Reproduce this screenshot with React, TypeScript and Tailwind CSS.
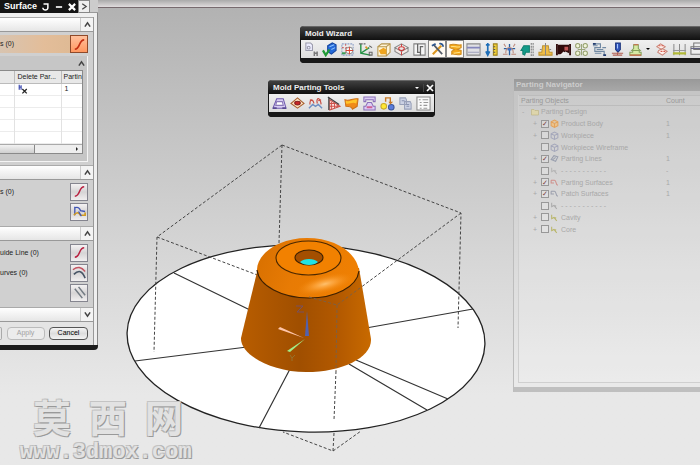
import type { ReactNode } from 'react'

type Tool = { name: string; art: ReactNode; active?: boolean }

function Glyph({ children, size = 'h-[15px] w-[15px]' }: { children: ReactNode; size?: string }) {
    return (
        <svg className={`${size} shrink-0`} viewBox="0 0 16 16" fill="none" strokeWidth={1.1} aria-hidden="true">
            {children}
        </svg>
    )
}

const wizardTools: Tool[] = [
    { name: 'Initialize Project', art: <><path d="M2 1h5l2 2v6H2z" fill="#eef" stroke="#99a" /><circle cx="5" cy="6" r="1.5" stroke="#99a" /><path d="M11 10v5M11 12h3M14 10v5" stroke="#777" strokeWidth="1.6" /></> },
    { name: 'Family Mold', art: <><path d="M6 4l5-3 4 2v6l-5 4-4-3z" fill="#2468d8" stroke="#1848a0" /><path d="M8 5l5-2M10 8l4-2" stroke="#8fc4ff" /><path d="M1 9l3 5 4-6" stroke="#219a35" strokeWidth="2.4" /></> },
    { name: 'Mold CSYS', art: <><path d="M2 2h12v12H2z" stroke="#8da0c8" strokeDasharray="2 1" /><path d="M2 6h12M6 2v12" stroke="#c66" strokeDasharray="2 2" /><circle cx="10" cy="9" r="3.5" fill="#fff" stroke="#999" /><path d="M10 5v8M6 9h8" stroke="#d43" /><path d="M2 12h4" stroke="#3a9e58" strokeWidth="2" /></> },
    { name: 'Shrinkage', art: <><path d="M3 2v10l10 2M3 12l9-6" stroke="#259245" strokeWidth="1.5" /><path d="M1 2h4M6 2h2M12 4l3 2M12 11h3v3h-3z" stroke="#666" /><path d="M8 5l2 2" stroke="#d93" strokeWidth="2" /></> },
    { name: 'Workpiece', art: <><path d="M2 5l4-3h9v9l-4 4H2z" fill="#fff5d8" stroke="#b3924a" /><path d="M2 5h9v10M11 5l4-3" stroke="#b3924a" /><path d="M3 9l5-3 3 2v5H5z" fill="#f0a51e" /></> },
    { name: 'Cavity Layout', art: <><path d="M8 2l7 4-7 4-7-4zM1 6v4l7 4 7-4V6" fill="#f5e9e5" stroke="#888" /><ellipse cx="8" cy="7" rx="3" ry="2" stroke="#c33" /><path d="M8 2v3M8 10v4" stroke="#c44" /></> },
    { name: 'Mold Tools Split', art: <><path d="M2 2h12v12H2z" fill="#f5f5f5" stroke="#808080" /><path d="M6 2v9h3V5h3M9 14v-3" stroke="#666" strokeWidth="1.4" /></> },
    { name: 'Mold Tools', active: true, art: <><path d="M3 13L12 4" stroke="#dc951c" strokeWidth="2.2" /><path d="M4 3l9 10" stroke="#565d68" strokeWidth="1.8" /><path d="M2 4l4-2M10 2c2-1 4 1 4 3" stroke="#31598f" strokeWidth="2" /></> },
    { name: 'Parting', active: true, art: <><path d="M2 3c5-2 7 1 12 0v3l-4 2 4 1v4c-5 2-8-1-10 0v-3l3-2-5-2z" fill="#f5a81a" stroke="#cf8d22" /><path d="M3 5c4-1 6 1 10 0M6 12c3-1 4 0 7-1" stroke="#ffe48a" /></> },
    { name: 'Mold Base', art: <><path d="M1 2h14v12H1z" fill="#e0e0e4" stroke="#888" /><path d="M1 5h14v2H1z" fill="#8486bb" /><path d="M2 11h12" stroke="#9ea0bb" /></> },
    { name: 'Standard Parts', art: <><path d="M4 1v13M2 10l2 4 2-4M2 3h4" stroke="#1f6fb8" strokeWidth="1.8" /><path d="M10 2h4v12h-4z" fill="#f3d138" stroke="#9b801a" /><path d="M10 5h2M10 8h2M10 11h2" stroke="#555" /></> },
    { name: 'Ejector Pin', art: <><path d="M2 7h12M8 2v12" stroke="#275e9f" strokeWidth="1.4" /><path d="M4 12c0-8 8-8 8 0M1 13h5M10 13h5M4 5L2 2M12 5l2-3" stroke="#bd8a7c" /><path d="M6 8h4" stroke="#3d70c9" strokeWidth="2" /></> },
    { name: 'Slide and Lifter', art: <><path d="M1 9l3-5h6v7H6l-1 3-2-1V9z" fill="#139b89" stroke="#138070" /><path d="M12 1v14M14 1v14" stroke="#777" strokeDasharray="2 1" /></> },
    { name: 'Sub-insert', art: <><path d="M5 4h6l1 7h3v3H1v-3h3z" fill="#f0bd45" stroke="#bd9435" /><path d="M8 1v13M2 8h2M12 8h2" stroke="#888" /></> },
    { name: 'Gate Library', art: <><path d="M1 2v12M15 2v12" stroke="#351010" strokeWidth="2" /><path d="M2 3h12v9l-4-2-4 3H2z" fill="#300c0c" /><path d="M9 5h4v4H9z" fill="#be5555" /><path d="M4 14l4-4 4 4z" fill="#eee" /></> },
    { name: 'Runner', art: <><path d="M8 2v12M4 8h8" stroke="#9aa67a" /><g fill="#f0f5d9" stroke="#96a070"><circle cx="4" cy="4" r="2.3" /><circle cx="12" cy="4" r="2.3" /><circle cx="4" cy="12" r="2.3" /><circle cx="12" cy="12" r="2.3" /></g></> },
    { name: 'Cooling Channel', art: <><path d="M1 2h8v4H3v4h10v4M1 4h5M11 6h4M5 8h7M3 12h7" stroke="#7189a3" strokeWidth="1.2" /><path d="M1 2h3M12 14h3" stroke="#233d70" strokeWidth="2" /></> },
    { name: 'Electrode', art: <><path d="M6 1h5v7l-2.5 3L6 8z" fill="#3458bd" stroke="#1b347b" /><path d="M8 11v3M2 12h12M3 14h10" stroke="#b36052" /><path d="M8 2v5" stroke="#a7c8ff" /></> },
    { name: 'Pocket', art: <><path d="M6 7V3h5v4l2 2H4zM5 9h7v2h2v3H2v-3h3z" fill="#d5e9a3" stroke="#84a05a" /><path d="M6 3h5M2 14h12" stroke="#cb6649" /></> },
]

const trailingTools: Tool[] = [
    { name: 'Trim Mold Components', art: <><path d="M3 5l4-3 5 3-4 3zM5 9l4-2 5 3-5 4-5-3z" fill="#fff1ed" stroke="#cb8679" /><path d="M5 4h6M7 10h5" stroke="#d95b4a" strokeDasharray="2 1" /></> },
    { name: 'View Manager', art: <><path d="M2 2v12M8 2v12M14 2v12" stroke="#8b8b8b" /><path d="M1 12h14" stroke="#b2ba37" strokeWidth="2.4" /><path d="M1 9h14" stroke="#999" /></> },
    { name: 'Drawing', art: <><path d="M4 1h11v7H4zM1 5h11v8H1z" fill="#eee" stroke="#777" /><path d="M1 7h11" stroke="#668" /></> },
]

const partingTools: Tool[] = [
    { name: 'Design Regions', art: <><path d="M5 3h7l3 10H1z" fill="#d8cef3" stroke="#6f5bae" /><path d="M5 6h6l1 4H4z" fill="#fff" stroke="#8a79b8" /><path d="M1 13h4M11 13h4" stroke="#5a4b92" strokeWidth="1.8" /></> },
    { name: 'Extract Regions', art: <><path d="M8 2l7 6-7 5-7-5z" fill="#ffe7c4" stroke="#a96333" /><ellipse cx="8" cy="7.500" rx="3" ry="2" fill="#c82626" stroke="#842020" /></> },
    { name: 'Create Patch', art: <><path d="M2 9c0-9 5-3 4-1M10 8C8 2 13 0 14 9M2 4l3 1M14 4l-3 1" stroke="#c95046" strokeWidth="1.3" /><path d="M1 13l4-4 3 2 3-2 4 4" stroke="#708fc2" strokeWidth="1.5" /></> },
    { name: 'Edit Parting Lines', art: <><path d="M4 4l11 7-11 4z" fill="#fff0ee" stroke="#c9524b" /><path d="M6 6v8M9 8v5M12 9v3M4 8h6M4 11h10" stroke="#d0524b" /><path d="M3 1v14M2 1l12 8" stroke="#444" strokeWidth="1.3" /></> },
    { name: 'Design Parting Surface', art: <><path d="M1 4c5 2 8-2 14-1l-1 8-5 3c-1-3-4-3-7-3z" fill="#f08b19" stroke="#cc721a" /><path d="M2 5c5 2 8-2 12-1l-1 4C9 6 6 9 2 8z" fill="#ffc52a" /></> },
    { name: 'Define Cavity and Core', art: <><path d="M2 1h12v5h-2V4H4v2H2zM2 15h12v-4h-2L10 7H6l-2 4H2z" fill="#dccdf5" stroke="#8a70b8" /><path d="M5 12h6" stroke="#cd6095" strokeWidth="2" /></> },
    { name: 'Swap Model', art: <><circle cx="4" cy="11" r="3" fill="#ffe833" stroke="#c9ab29" /><circle cx="12" cy="12" r="3" fill="#5a7cdb" stroke="#3e589b" /><path d="M6 6V2h5v5" stroke="#c87924" strokeWidth="1.5" /><path d="M9 6l2 3 3-3" fill="#c87924" /></> },
    { name: 'Backup Parting', art: <><path d="M2 2h6l1 2v5H2zM7 6h6l1 2v6H7z" fill="#cbd1e3" stroke="#98a0b8" /><path d="M4 5h3M9 9h3M9 11h3" stroke="#8993b1" /></> },
    { name: 'Parting Navigator', art: <><path d="M1 1h14v14H1z" fill="#fafafa" stroke="#888" /><path d="M3 4h2M7 4h6M4 7h2M8 7h5M4 10h2M8 10h4M4 13h2M8 13h4" stroke="#999" /></> },
]

const curve = <path d="M3 13c6 0 4-10 10-10" stroke="#b81f3f" strokeWidth="1.6" />

function ToolButton({ tool }: { tool: Tool }) {
    return (
        <button
            type="button"
            aria-label={tool.name}
            className={`flex h-[18px] w-[18px] shrink-0 items-center justify-center ${tool.active ? 'border border-[#888] bg-[#fffaf2]' : ''}`}
        >
            <Glyph>{tool.art}</Glyph>
        </button>
    )
}

function Chevron({ down = false }: { down?: boolean }) {
    return (
        <svg className={`h-[7px] w-[7px] ${down ? 'rotate-180' : ''}`} viewBox="0 0 8 8" fill="none" stroke="#444" strokeWidth="1.7" aria-hidden="true">
            <path d="M1 6.5L4 2l3 4.500" />
        </svg>
    )
}

function SectionBar({ label, down }: { label: string; down?: boolean }) {
    return (
        <div className="flex h-[15px] shrink-0 justify-end border-y border-t-[#aaa] border-b-[#999] bg-gradient-to-b from-white to-[#e6e6e6]">
            <button type="button" aria-label={label} className="flex w-[13px] items-center justify-center border-l border-[#ccc] bg-[#f4f4f4]">
                <Chevron down={down} />
            </button>
        </div>
    )
}

function PickButton({ label, children, active = false }: { label: string; children: ReactNode; active?: boolean }) {
    return (
        <button
            type="button"
            aria-label={label}
            className={`flex h-[18px] w-[18px] shrink-0 items-center justify-center border ${active ? 'border-[#8f4a2a] bg-gradient-to-b from-[#ffc09c] to-[#ff9860]' : 'border-[#85858f] bg-gradient-to-b from-[#f4f2f3] via-[#d6d4d5] to-[#f1eff0]'}`}
        >
            <Glyph>{children}</Glyph>
        </button>
    )
}

function SurfaceDialog() {
    return (
        <section className="absolute top-0 left-0 w-[98px] text-[7px] leading-[10px] text-[#222]">
            <header className="flex h-[13px] items-center bg-[#151515] pl-1 text-white">
                <h2 className="flex-1 text-[9px] leading-[13px] font-bold">Surface</h2>
                <div className="flex h-full items-center">
                    <button type="button" aria-label="Reset" className="flex w-[13px] justify-center">
                        <Glyph size="h-[10px] w-[10px]"><path d="M4 3h7v6c0 5-8 5-8 0" stroke="#fff" strokeWidth="2.4" /></Glyph>
                    </button>
                    <button type="button" aria-label="Minimize" className="flex w-[13px] justify-center">
                        <Glyph size="h-[10px] w-[10px]"><path d="M3 8h10" stroke="#fff" strokeWidth="2.6" /></Glyph>
                    </button>
                    <button type="button" aria-label="Close" className="flex w-[13px] justify-center">
                        <Glyph size="h-[10px] w-[10px]"><path d="M3 3l10 10M13 3L3 13" stroke="#fff" strokeWidth="3.4" /></Glyph>
                    </button>
                    <button type="button" aria-label="Expand" className="flex h-full w-[12px] items-center justify-center border border-[#888] bg-[#eee]">
                        <Glyph size="h-[9px] w-[9px]"><path d="M4 3l7 5-7 5" stroke="#444" strokeWidth="2.2" /></Glyph>
                    </button>
                </div>
                <span className="h-full w-2 border-b border-[#999] bg-[#ccc]" />
            </header>
            <div className="border-r border-[#888] bg-[#efefef] pt-1 pr-[3px]">
                <div className="border-r border-[#999] bg-[#d0d0d0]">
                    <SectionBar label="Collapse curves" />
                    <div className="mt-[3px] mr-[5px] flex h-[18px] items-center justify-between bg-gradient-to-r from-[#d8c4b0] via-[#e3bd99] to-[#dcb892]">
                        <span>s (0)</span>
                        <PickButton label="Select curves" active><path d="M3 13c6 0 4-10 10-10" stroke="#c32f12" strokeWidth="1.8" /></PickButton>
                    </div>
                    <div className="mt-[3px] mr-[5px] border-r border-b border-[#f4f4f4] bg-[#c6c6c6] pb-[7px]">
                        <div className="flex h-[14px] items-center justify-end pr-[2px]">
                            <button type="button" aria-label="Collapse list"><Chevron /></button>
                        </div>
                        <div className="mr-1 border border-l-0 border-[#8a8a8a] bg-white">
                            <table className="w-full table-fixed border-collapse">
                                <thead>
                                    <tr className="h-[12px] bg-[#e8e8e8] text-left">
                                        <th className="w-[14px] border-r border-b border-[#bbb]" />
                                        <th className="w-[47px] border-r border-b border-[#bbb] pl-[3px] font-normal whitespace-nowrap">Delete Par...</th>
                                        <th className="border-b border-[#bbb] pl-[2px] font-normal whitespace-nowrap">Partin</th>
                                    </tr>
                                </thead>
                                <tbody>
                                    {[0, 1, 2, 3, 4].map((row) => (
                                        <tr key={row} className="h-[12px] border-b border-[#ececec]">
                                            <td className="border-r border-[#e2e2e2]" />
                                            <td className="border-r border-[#e2e2e2] pl-[3px]">
                                                {row === 0 && (
                                                    <Glyph size="h-[10px] w-[10px]"><path d="M2 1v8M5 2v7M2 5h3" stroke="#4754b4" strokeWidth="2" /><path d="M7 8l7 7M14 8l-7 7" stroke="#222" strokeWidth="2" /></Glyph>
                                                )}
                                            </td>
                                            <td className="pl-[3px]">{row === 0 ? '1' : ''}</td>
                                        </tr>
                                    ))}
                                </tbody>
                            </table>
                            <div className="flex h-[9px] items-center justify-between border-t border-[#aaa] bg-[#eee]">
                                <div className="h-full w-[35px] border-r border-[#888] bg-gradient-to-b from-[#f2f2f2] to-[#cfcfcf]" />
                                <span className="mr-1 h-0 w-0 border-y-2 border-l-2 border-y-transparent border-l-[#222]" />
                            </div>
                        </div>
                    </div>
                    <div className="mt-[3px]"><SectionBar label="Collapse section strings" /></div>
                    <div className="flex flex-col gap-[2px] pt-[3px] pr-[5px] pb-[5px]">
                        <div className="flex items-center justify-between">
                            <span>s (0)</span>
                            <PickButton label="Select section">{curve}</PickButton>
                        </div>
                        <div className="flex justify-end">
                            <PickButton label="Specify direction"><path d="M3 3v9M3 4c3-1 5 0 6 3l5 1" stroke="#4054b4" strokeWidth="1.4" /><path d="M2 12c3-4 6-3 7 0h5v-3" stroke="#d19b23" strokeWidth="1.8" /><path d="M7 8l3 5" stroke="#4257b8" strokeWidth="1.4" /></PickButton>
                        </div>
                    </div>
                    <SectionBar label="Collapse guides" />
                    <div className="flex flex-col gap-[2px] pt-[3px] pr-[5px] pb-[5px]">
                        <div className="flex items-center justify-between">
                            <span>uide Line (0)</span>
                            <PickButton label="Select guide line">{curve}</PickButton>
                        </div>
                        <div className="flex items-center justify-between">
                            <span>urves (0)</span>
                            <PickButton label="Select guide curves"><path d="M1 5c5-4 9-3 13 2" stroke="#c35361" strokeWidth="1.5" /><path d="M2 10c5-5 9-4 12 4" stroke="#475465" strokeWidth="1.7" /></PickButton>
                        </div>
                        <div className="flex justify-end">
                            <PickButton label="Parallel lines"><path d="M3 4l8 10M7 2l7 9" stroke="#737b83" strokeWidth="1.6" /></PickButton>
                        </div>
                    </div>
                    <SectionBar label="Expand settings" down />
                    <div className="flex h-[23px] items-center justify-between bg-[#e4e4e4] pr-[5px]">
                        <span className="h-[13px] w-[2px] rounded-r-sm border border-l-0 border-[#aaa]" />
                        <button type="button" disabled className="h-[13px] w-[38px] rounded-sm border border-[#bbb] bg-[#ececec] text-[#a2a2a2]">Apply</button>
                        <button type="button" className="h-[13px] w-[39px] rounded-sm border border-[#555] bg-gradient-to-b from-[#f5f5f5] via-[#ddd] to-[#f3f3f3] text-black">Cancel</button>
                    </div>
                </div>
            </div>
            <div className="h-[5px] rounded-br-sm bg-[#1c1c1c]" />
        </section>
    )
}

function WindowTitle({ children }: { children: string }) {
    return <h2 className="flex-1 text-[8px] leading-[13px] font-bold text-[#eee]">{children}</h2>
}

function MoldWizardBar() {
    return (
        <section className="absolute top-[26px] right-0 left-[300px] overflow-hidden rounded-tl-sm rounded-bl-sm bg-[#181818]">
            <header className="flex h-[14px] items-center border-t border-[#666] bg-gradient-to-b from-[#404040] to-[#111] pl-[5px]">
                <WindowTitle>Mold Wizard</WindowTitle>
            </header>
            <div className="ml-px flex h-[18px] items-center bg-gradient-to-b from-[#f0f0f0] to-[#dedede] pl-px">
                {wizardTools.map((tool) => <ToolButton key={tool.name} tool={tool} />)}
                <button type="button" aria-label="More options" className="flex w-[8px] shrink-0 justify-center">
                    <span className="h-0 w-0 border-x-2 border-t-2 border-x-transparent border-t-black" />
                </button>
                {trailingTools.map((tool) => <ToolButton key={tool.name} tool={tool} />)}
            </div>
            <div className="h-[5px] bg-[#181818]" />
        </section>
    )
}

function PartingToolsBar() {
    return (
        <section className="absolute top-[80px] left-[268px] w-[167px] overflow-hidden rounded-sm bg-[#181818]">
            <header className="flex h-[14px] items-center border-t border-[#666] bg-gradient-to-b from-[#404040] to-[#111] pl-[5px]">
                <WindowTitle>Mold Parting Tools</WindowTitle>
                <button type="button" aria-label="Toolbar options" className="flex w-[12px] justify-center">
                    <span className="h-0 w-0 border-x-2 border-t-2 border-x-transparent border-t-white" />
                </button>
                <button type="button" aria-label="Close toolbar" className="flex w-[12px] justify-center border-l border-[#444]">
                    <Glyph size="h-[8px] w-[8px]"><path d="M2 2l12 12M14 2L2 14" stroke="#fff" strokeWidth="3.4" /></Glyph>
                </button>
            </header>
            <div className="mx-px flex h-[18px] items-center bg-gradient-to-b from-[#f0f0f0] to-[#dcdcdc] pl-px">
                {partingTools.map((tool) => <ToolButton key={tool.name} tool={tool} />)}
            </div>
            <div className="h-[5px] bg-[#181818]" />
        </section>
    )
}

type NavRow = { name: string; checked?: boolean; count?: string; branch?: boolean; color: string; kind: 'cube' | 'lines' | 'sheet' | 'part' }

const navRows: NavRow[] = [
    { name: 'Product Body', checked: true, count: '1', branch: true, color: '#e2a25c', kind: 'cube' },
    { name: 'Workpiece', count: '1', branch: true, color: '#a5a8bb', kind: 'cube' },
    { name: 'Workpiece Wireframe', color: '#a5a8bb', kind: 'cube' },
    { name: 'Parting Lines', checked: true, count: '1', branch: true, color: '#999fae', kind: 'lines' },
    { name: '- - - - - - - - - - -', count: '-', color: '#b5b5b5', kind: 'part' },
    { name: 'Parting Surfaces', checked: true, count: '1', branch: true, color: '#cf8f8a', kind: 'sheet' },
    { name: 'Patch Surfaces', checked: true, count: '1', branch: true, color: '#9b9fad', kind: 'sheet' },
    { name: '- - - - - - - - - - -', color: '#aaa', kind: 'part' },
    { name: 'Cavity', branch: true, color: '#b8b568', kind: 'part' },
    { name: 'Core', branch: true, color: '#b8b568', kind: 'part' },
]

const navArt = {
    cube: <path d="M2 5l6-3 6 3v7l-6 3-6-3zM2 5l6 3 6-3M8 8v7" />,
    lines: <path d="M2 10l5-7 7 2-4 8zM4 11l6-5" />,
    sheet: <path d="M2 4h6c4 0 1 8 6 9M2 4v5h5" />,
    part: <path d="M3 3v7l4-2 5 6M7 8l4 1" />,
}

function PartingNavigator() {
    return (
        <section className="absolute top-[79px] right-0 left-[513px] border-l border-[#bdbdbd] text-[7px] leading-[9px] text-[#a8a8a8]">
            <header className="h-[12px] bg-gradient-to-b from-[#999] to-[#a8a8a8] pl-[2px]">
                <h2 className="text-[8px] leading-[12px] font-bold text-[#ccc]">Parting Navigator</h2>
            </header>
            <div className="border-b-[5px] border-[#bfbfbf] bg-white/10 pt-1 pb-1 pl-[4px]">
                <div className="h-[288px] border-b border-l border-[#cfcfcf] bg-white/10">
                    <table className="h-[140px] w-full table-fixed border-collapse text-left">
                        <thead>
                            <tr className="border-y border-[#bcbcbc] text-[#989898]">
                                <th className="pl-[2px] font-normal">Parting Objects</th>
                                <th className="w-[34px] font-normal">Count</th>
                            </tr>
                        </thead>
                        <tbody>
                            <tr>
                                <td>
                                    <div className="flex items-center gap-[2px] pl-[3px]">
                                        <span className="w-[7px]">-</span>
                                        <Glyph size="h-[8px] w-[8px]"><path d="M1 3h5l2 2h7v9H1z" fill="#ddd5ac" stroke="#b9af78" /></Glyph>
                                        <span>Parting Design</span>
                                    </div>
                                </td>
                                <td />
                            </tr>
                            {navRows.map((row, index) => (
                                <tr key={index}>
                                    <td>
                                        <div className="flex items-center pl-[14px]">
                                            <span className="w-[8px]">{row.branch ? '+' : ''}</span>
                                            <label className="flex items-center">
                                                <input
                                                    type="checkbox"
                                                    defaultChecked={row.checked}
                                                    className="flex h-[8px] w-[8px] appearance-none items-center justify-center border border-[#989898] bg-white/20 text-[7px] leading-none text-[#784040] checked:before:content-['✓']"
                                                />
                                                <svg className="ml-px h-[9px] w-[9px]" viewBox="0 0 16 16" stroke={row.color} strokeWidth="1.8" fill={index === 0 ? '#ecc38b' : 'none'} aria-hidden="true">
                                                    {navArt[row.kind]}
                                                </svg>
                                                <span className="ml-[2px] whitespace-nowrap">{row.name}</span>
                                            </label>
                                        </div>
                                    </td>
                                    <td>{row.count}</td>
                                </tr>
                            ))}
                        </tbody>
                    </table>
                </div>
            </div>
        </section>
    )
}

function ModelView() {
    return (
        <svg className="absolute top-0 left-0 h-[465px] w-[700px] max-w-none" viewBox="0 0 700 465" fill="none" role="img" aria-label="Mold part with parting surface">
            <defs>
                <linearGradient id="side" x1="241" x2="371" y1="0" y2="0" gradientUnits="userSpaceOnUse">
                    <stop offset="0" stopColor="#b85d00" />
                    <stop offset="0.15" stopColor="#b05800" />
                    <stop offset="0.45" stopColor="#a04f00" />
                    <stop offset="0.75" stopColor="#b35900" />
                    <stop offset="1" stopColor="#c86a00" />
                </linearGradient>
                <linearGradient id="dome" x1="257" x2="359" y1="250" y2="285" gradientUnits="userSpaceOnUse">
                    <stop offset="0" stopColor="#d87000" />
                    <stop offset="0.4" stopColor="#e87b04" />
                    <stop offset="1" stopColor="#f08002" />
                </linearGradient>
                <radialGradient id="shine" cx="0" cy="0" r="1" gradientUnits="userSpaceOnUse" gradientTransform="translate(325 284) scale(29 9)">
                    <stop offset="0" stopColor="#ffc06c" />
                    <stop offset="0.4" stopColor="#ffa840" stopOpacity="0.7" />
                    <stop offset="1" stopColor="#f28a10" stopOpacity="0" />
                </radialGradient>
            </defs>
            <ellipse cx="306" cy="338.500" rx="179" ry="93.500" transform="rotate(2 306 338.500)" fill="#fff" stroke="#222" strokeWidth="1.3" />
            <path d="M174 273l76 37M135 361l112-14M259 428l31-59M473 309l-107 19M448 399l-92-39M427 410l-78-46" stroke="#333" strokeWidth="1.2" />
            <g stroke="#444" strokeDasharray="3 2">
                <path d="M282 145L157 237L154 352M282 145L461 213L458 328M282 145L279 243M157 237L260 276M461 213L360 288" />
                <path d="M336 371L334 420M334 433L333 451L283 432M333 451L361 431" />
            </g>
            <path d="M258 268L241 338C240 354 270 372 306 372C343 372 372 357 371 339L359 268z" fill="url(#side)" />
            <path d="M257 270C257 254 278 238 307 238C336 238 357 253 359 271C357 287 335 298 309 298C282 298 259 286 257 270z" fill="url(#dome)" />
            <ellipse cx="325" cy="284" rx="29" ry="9" transform="rotate(-14 325 284)" fill="url(#shine)" />
            <path d="M257 270C259 286 282 298 309 298C335 298 357 287 359 271" stroke="#3e2000" strokeWidth="1.2" />
            <ellipse cx="308.500" cy="258" rx="32.500" ry="17" fill="#f28100" stroke="#4b2800" strokeWidth="1.1" />
            <ellipse cx="309" cy="257.500" rx="14" ry="7.500" fill="#a44f00" stroke="#3d2000" strokeWidth="1.1" />
            <path d="M300 262c4-4 14-4 18 0c-4 4-14 4-18 0z" fill="#20e3e5" />
            <path d="M309 297L337 305L360 288M337 305L336 371" stroke="#7c6046" strokeDasharray="3 2" />
            <path d="M305 336l2-25 2 25z" fill="#5261ad" />
            <path d="M304 338l-26-9 2-2z" fill="#ffc6aa" />
            <path d="M305 339l-15 13-3-1z" fill="#a2ee88" />
            <path d="M296 306h7l-6 6h7" stroke="#765164" />
            <path d="M290 355l2 3 3-3M292 358v3" stroke="#97722c" />
        </svg>
    )
}

function Watermark() {
    return (
        <div className="absolute bottom-0 left-[20px] flex flex-col font-bold text-[#e2e2e2] [text-shadow:1px_1px_0_#999,-1px_-1px_0_#c4c4c4,1px_-1px_0_#b4b4b4,-1px_1px_0_#b4b4b4]">
            <div className="flex gap-[18px] pl-[13px] font-['Liberation_Sans','Noto_Sans_CJK_SC',sans-serif] text-[38px] leading-[44px]">
                <span>莫</span>
                <span>西</span>
                <span>网</span>
            </div>
            <a href="#" className="font-['Liberation_Mono',monospace] text-[22px] leading-[24px]">www.3dmox.com</a>
        </div>
    )
}

export default function App() {
    return (
        <main className="relative h-screen min-h-[465px] overflow-hidden bg-gradient-to-b from-[#b1b1b1] via-[#d6d6d6] via-55% to-[#e8e8e8] to-85% font-['Liberation_Sans',Arial,sans-serif]">
            <div className="h-[8px] border-b border-[#776a6e] bg-gradient-to-b from-[#aaa] to-[#e0dcdd]" />
            <ModelView />
            <Watermark />
            <PartingNavigator />
            <SurfaceDialog />
            <MoldWizardBar />
            <PartingToolsBar />
        </main>
    )
}
